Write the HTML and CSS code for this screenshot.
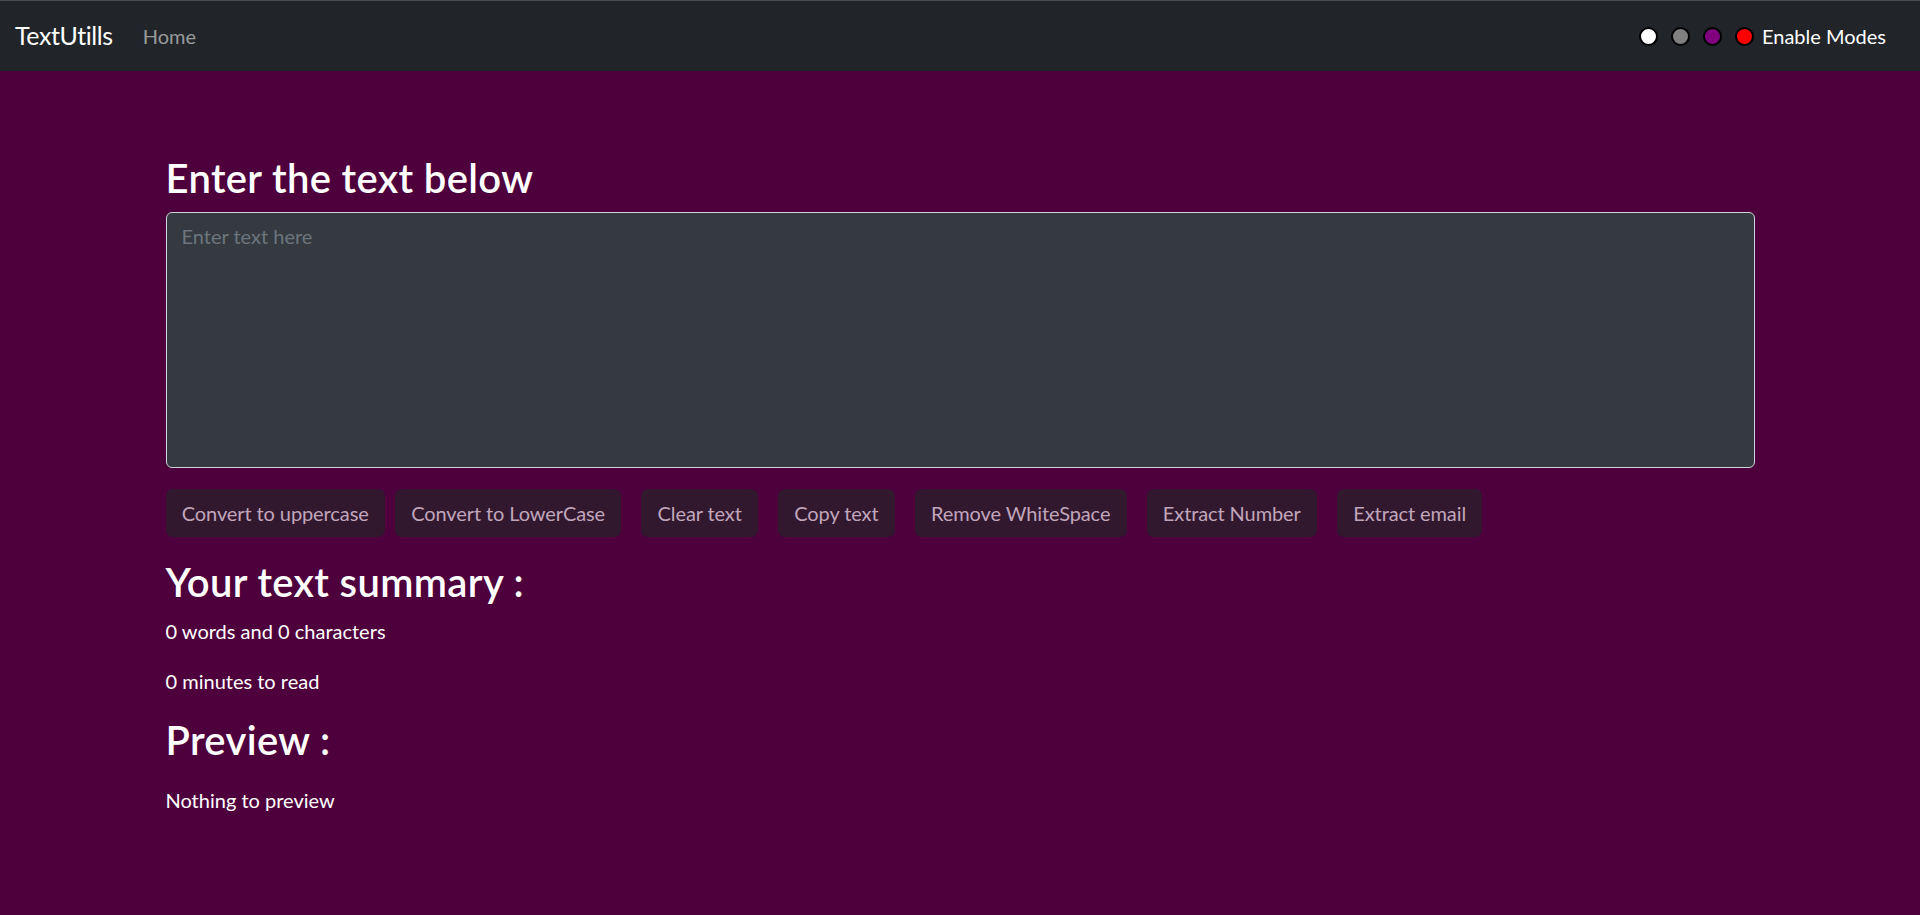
FILE: index.html
```html
<!DOCTYPE html>
<html lang="en">
<head>
<meta charset="utf-8">
<title>TextUtills</title>
<link rel="stylesheet" href="styles.css">
</head>
<body>
<nav class="navbar">
  <div class="nav-left">
    <a class="brand" href="#">TextUtills</a>
    <a class="nav-link" href="#">Home</a>
  </div>
  <div class="modes">
    <div class="dots">
      <span class="dot dot-white"></span>
      <span class="dot dot-grey"></span>
      <span class="dot dot-purple"></span>
      <span class="dot dot-red"></span>
    </div>
    <span class="modes-label">Enable Modes</span>
  </div>
</nav>
<main class="container">
  <h2 class="heading">Enter the text below</h2>
  <textarea class="text-input" rows="8" placeholder="Enter text here"></textarea>
  <div class="actions">
    <button class="btn">Convert to uppercase</button>
    <button class="btn btn-spaced">Convert to LowerCase</button>
    <button class="btn btn-spaced">Clear text</button>
    <button class="btn btn-spaced">Copy text</button>
    <button class="btn btn-spaced">Remove WhiteSpace</button>
    <button class="btn btn-spaced">Extract Number</button>
    <button class="btn btn-spaced">Extract email</button>
  </div>
  <section class="summary">
    <h2 class="heading">Your text summary :</h2>
    <p class="text">0 words and 0 characters</p>
    <p class="text">0 minutes to read</p>
    <h2 class="heading">Preview :</h2>
    <p class="text preview-text">Nothing to preview</p>
  </section>
</main>
</body>
</html>
```
FILE: styles.css
```css
* {
  box-sizing: border-box;
}

html,
body {
  margin: 0;
}

body {
  background: #4e003c;
  color: #ffffff;
  font-family: Lato, "Noto Sans", sans-serif;
  font-size: 20px;
  line-height: 30px;
  min-height: 915px;
}

.navbar {
  display: flex;
  justify-content: space-between;
  align-items: center;
  height: 71px;
  border-top: 1px solid #4b4d50;
  background: #212529;
  padding: 0 34px 0 15px;
}

.nav-left {
  display: flex;
  align-items: center;
}

.brand {
  font-size: 25px;
  line-height: 37.5px;
  letter-spacing: -0.4px;
  color: #ffffff;
  text-decoration: none;
  margin-right: 20px;
}

.nav-link {
  color: rgba(255, 255, 255, 0.55);
  padding: 0 10px;
  text-decoration: none;
}

.modes {
  display: flex;
  align-items: center;
}

.dots {
  display: flex;
  gap: 13px;
  margin-right: 8px;
}

.dot {
  display: block;
  width: 19px;
  height: 19px;
  border-radius: 50%;
  border: 2px solid #000000;
}

.dot-white { background: #ffffff; }
.dot-grey { background: #808080; }
.dot-purple { background: #800080; }
.dot-red { background: #ff0000; }

.modes-label {
  color: #ffffff;
}

.container {
  width: 1589px;
  margin: 0 auto;
  padding-top: 82.5px;
}

.heading {
  font-size: 40px;
  line-height: 48px;
  font-weight: 600;
  letter-spacing: 0.35px;
  margin: 0 0 10.5px;
}

.text-input {
  display: block;
  width: 100%;
  height: 256px;
  padding: 7.5px 15px;
  border: 1px solid #ced4da;
  border-radius: 6px;
  background: #343a40;
  color: #ffffff;
  font: inherit;
  resize: none;
  margin: 0 0 21px;
}

.text-input::placeholder {
  color: #6c757d;
}

.actions {
  display: flex;
  flex-wrap: wrap;
  margin-bottom: 20.5px;
}

.btn {
  font: inherit;
  letter-spacing: -0.1px;
  padding: 8px 15.25px;
  border: 1px solid transparent;
  border-radius: 7px;
  background: #31182f;
  color: #c1a6bb;
}

.btn-spaced {
  margin: 0 10px;
}

.summary .heading {
  margin-bottom: 10px;
}

.text {
  margin: 0 0 20px;
}

.preview-text {
  margin-top: 21px;
}
```
